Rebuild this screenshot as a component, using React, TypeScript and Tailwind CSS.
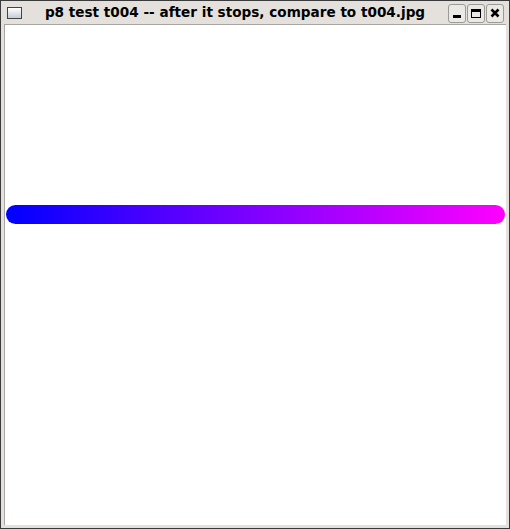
import React from 'react'

function TitleButton({ children }: { children: React.ReactNode }) {
    return (
        <div className="flex h-[19px] w-[18px] items-center justify-center rounded-[3px] border border-[#9d9a94] bg-[#ebe9e5]">
            {children}
        </div>
    )
}

export default function App() {
    return (
        <div className="flex h-[529px] w-[510px] flex-col border border-[#3a3a3a] bg-[#e4e1dc]" style={{ fontFamily: '"DejaVu Sans", sans-serif' }}>
            {/* title bar */}
            <div className="flex h-[23px] shrink-0 items-center pl-[6px] pr-[5px] pt-[1px]">
                <div className="h-[12px] w-[15px] border border-[#444] bg-gradient-to-b from-white to-[#c8cbd6]" />
                <div className="flex-1 text-center text-[13.6px] font-bold leading-none text-black">
                    p8 test t004 -- after it stops, compare to t004.jpg
                </div>
                <div className="flex gap-[1px]">
                    <TitleButton>
                        <div className="mt-[7px] h-[3px] w-[8px] bg-black" />
                    </TitleButton>
                    <TitleButton>
                        <div className="h-[9px] w-[10px] border border-black border-t-[3px]" />
                    </TitleButton>
                    <TitleButton>
                        <svg width="10" height="10" viewBox="0 0 10 10">
                            <path d="M1.5 1.5 L8.5 8.5 M8.5 1.5 L1.5 8.5" stroke="black" strokeWidth="2.6" />
                        </svg>
                    </TitleButton>
                </div>
            </div>
            {/* client area */}
            <div className="mx-[3px] mb-[3px] flex flex-1 flex-col border-l border-t border-[#a8a6a2] bg-white pt-[180px]">
                <div className="mx-[1px] h-[19px] rounded-full bg-[linear-gradient(to_right,#0000ff,#ff00ff)]" />
            </div>
        </div>
    )
}
